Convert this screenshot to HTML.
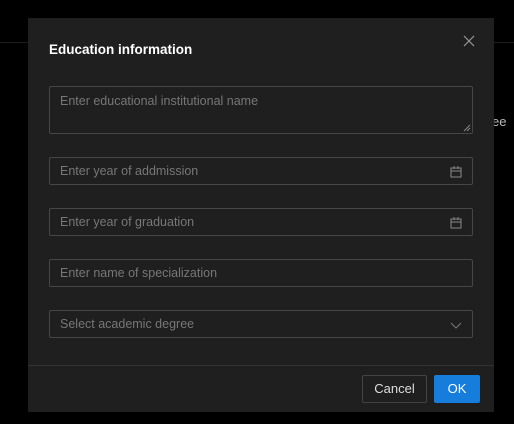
<!DOCTYPE html><html><head><style>
body{margin:0;width:514px;height:424px;background:#000;position:relative;overflow:hidden;font-family:"Liberation Sans",sans-serif}
.line{position:absolute;left:0;right:0;top:42px;height:1px;background:#1c1c1c}
.ee{position:absolute;left:492px;top:114px;color:#bbb;font-size:13px}
.m{position:absolute;left:28px;top:18px;width:466px;height:394px;background:#1f1f1f}
.t{position:absolute;left:21px;top:24px;color:#fff;font-weight:bold;font-size:13.5px}
.x{position:absolute;left:434px;top:16px}
.f{position:absolute;left:21px;width:424px;border:1px solid #464646;border-radius:2px;box-sizing:border-box;color:#777;font-size:12.5px;padding-left:10px;line-height:26px}
.ic{position:absolute;right:10px;top:8px}
.ft{position:absolute;left:0;right:0;top:347px;height:1px;background:#333}
.b{position:absolute;top:357px;height:28px;box-sizing:border-box;font-size:13px;line-height:26px;text-align:center;border-radius:2px}
</style></head><body>
<div class="line"></div><div class="ee">ee</div>
<div class="m">
<div class="t">Education information</div>
<svg class="x" width="14" height="14"><path d="M2 2L12 12M12 2L2 12" stroke="#999" stroke-width="1.2"/></svg>
<div class="f" style="top:68px;height:48px;line-height:28px">Enter educational institutional name
<svg style="position:absolute;right:1px;bottom:1px" width="8" height="8"><path d="M1 7L7 1M4 7L7 4" stroke="#888"/></svg></div>
<div class="f" style="top:139px;height:28px">Enter year of addmission<svg class="ic" width="12" height="12"><rect x="1" y="2" width="10" height="9" fill="none" stroke="#888"/><path d="M1 5H11M4 0V3M8 0V3" stroke="#888"/></svg></div>
<div class="f" style="top:190px;height:28px">Enter year of graduation<svg class="ic" width="12" height="12"><rect x="1" y="2" width="10" height="9" fill="none" stroke="#888"/><path d="M1 5H11M4 0V3M8 0V3" stroke="#888"/></svg></div>
<div class="f" style="top:241px;height:28px">Enter name of specialization</div>
<div class="f" style="top:292px;height:28px">Select academic degree<svg class="ic" width="12" height="12" style="top:9px"><path d="M1 3L6 8L11 3" fill="none" stroke="#777"/></svg></div>
<div class="ft"></div>
<div class="b" style="left:334px;width:65px;border:1px solid #434343;color:#ddd">Cancel</div>
<div class="b" style="left:406px;width:46px;background:#177ddc;color:#fff;line-height:28px">OK</div>
</div>
</body></html>
